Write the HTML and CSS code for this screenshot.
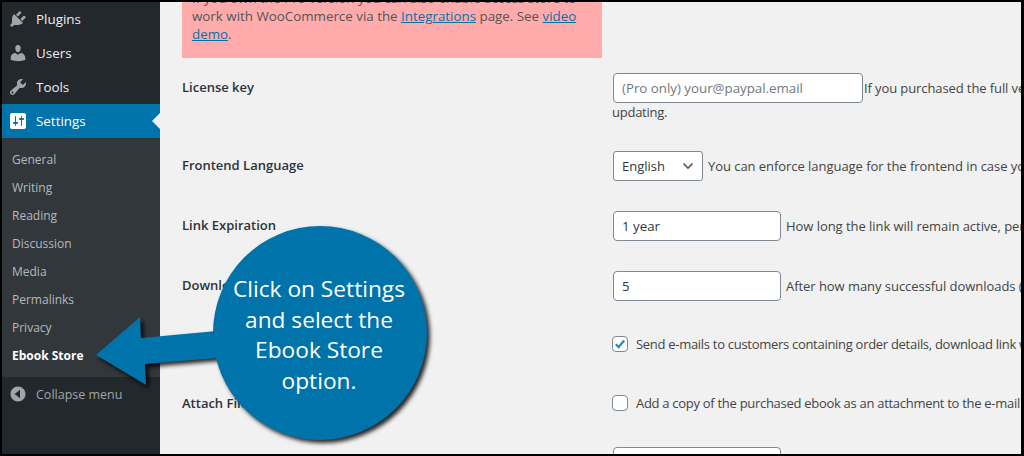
FILE: index.html
```html
<!DOCTYPE html>
<html lang="en">
<head>
<meta charset="utf-8">
<title>Ebook Store settings</title>
<link rel="stylesheet" href="styles.css">
</head>
<body>
<div class="frame">
  <nav class="sidebar">
    <a class="menu-item"><svg class="menu-icon" viewBox="0 0 20 20"><path d="M13.11 4.36L9.87 7.6 8 5.73l3.24-3.24c.35-.34 1.05-.2 1.56.32.52.51.66 1.21.31 1.55zm-8 1.77l.91-1.12 9.01 9.01-1.19.84c-.71.71-2.63 1.16-3.82 1.16H6.14L4.9 17.26c-.59.59-1.54.59-2.12 0-.59-.58-.59-1.53 0-2.12l1.24-1.24v-3.88c0-1.13.4-3.19 1.09-3.89zm7.26 3.97l3.24-3.24c.34-.35 1.04-.21 1.55.31.52.51.66 1.21.31 1.55l-3.24 3.25z"/></svg>Plugins</a>
    <a class="menu-item"><svg class="menu-icon" viewBox="0 0 20 20"><path d="M10 9.25c-2.27 0-2.73-3.44-2.73-3.44C7 4.02 7.82 2 9.97 2c2.16 0 2.98 2.02 2.71 3.81 0 0-.41 3.44-2.68 3.44zm0 2.57L12.72 10c2.39 0 4.52 2.33 4.52 4.53v2.49s-3.65 1.13-7.24 1.13c-3.65 0-7.24-1.13-7.24-1.13v-2.49c0-2.25 1.94-4.48 4.47-4.48z"/></svg>Users</a>
    <a class="menu-item"><svg class="menu-icon" viewBox="0 0 20 20"><path d="M16.68 9.77c-1.34 1.34-3.3 1.67-4.95.99l-5.41 6.52c-.99.99-2.59.99-3.58 0s-.99-2.59 0-3.57l6.52-5.42c-.68-1.65-.35-3.61.99-4.95 1.28-1.28 3.12-1.62 4.72-1.06l-2.89 2.89 2.82 2.82 2.86-2.87c.53 1.58.18 3.39-1.08 4.65zM3.81 16.21c.4.39 1.04.39 1.43 0 .4-.4.4-1.04 0-1.43-.39-.4-1.03-.4-1.43 0-.39.39-.39 1.03 0 1.43z"/></svg>Tools</a>
    <a class="menu-item current"><svg class="menu-icon" viewBox="0 0 20 20"><path d="M18 16V4c0-1.1-.9-2-2-2H4c-1.1 0-2 .9-2 2v12c0 1.1.9 2 2 2h12c1.1 0 2-.9 2-2zM8 11h1c.55 0 1 .45 1 1s-.45 1-1 1H8v1.5c0 .28-.22.5-.5.5s-.5-.22-.5-.5V13H6c-.55 0-1-.45-1-1s.45-1 1-1h1V5.5c0-.28.22-.5.5-.5s.5.22.5.5V11zm5-2h-1c-.55 0-1-.45-1-1s.45-1 1-1h1V5.5c0-.28.22-.5.5-.5s.5.22.5.5V7h1c.55 0 1 .45 1 1s-.45 1-1 1h-1v5.5c0 .28-.22.5-.5.5s-.5-.22-.5-.5V9z"/></svg>Settings</a>
    <ul class="submenu">
      <li>General</li>
      <li>Writing</li>
      <li>Reading</li>
      <li>Discussion</li>
      <li>Media</li>
      <li>Permalinks</li>
      <li>Privacy</li>
      <li class="active">Ebook Store</li>
    </ul>
    <a class="menu-item collapse"><svg class="menu-icon" viewBox="0 0 20 20"><path d="M10 2.5c-4.1 0-7.5 3.4-7.5 7.5s3.4 7.5 7.5 7.5 7.5-3.4 7.5-7.5-3.4-7.5-7.5-7.5zM12 14.2L6.6 10 12 5.8z"/></svg>Collapse menu</a>
  </nav>

  <main class="content">
    <div class="notice">
      <p>If you own the Pro version you can also enable access store to work with WooCommerce via the <a>Integrations</a> page. See <a>video demo</a>.</p>
    </div>

    <div class="row">
      <div class="label">License key</div>
      <div class="field">
        <input class="input input-license" type="text" placeholder="(Pro only) your@paypal.email"><span class="tight">If you purchased the full version, please enter your PayPal e-mail to enable automatic</span>
        <span class="after-wrap">updating.</span>
      </div>
    </div>

    <div class="row">
      <div class="label">Frontend Language</div>
      <div class="field">
        <span class="select">English<svg class="chevron" viewBox="0 0 12 8"><path d="M1.5 1.5L6 6l4.5-4.5"/></svg></span><span class="desc">You can enforce language for the frontend in case you want to override the default</span>
      </div>
    </div>

    <div class="row">
      <div class="label">Link Expiration</div>
      <div class="field">
        <input class="input input-short" type="text" value="1 year"><span class="desc">How long the link will remain active, per purchase and per customer order</span>
      </div>
    </div>

    <div class="row">
      <div class="label">Download Limit</div>
      <div class="field">
        <input class="input input-short" type="text" value="5"><span class="desc">After how many successful downloads (per purchase) the link stops working for</span>
      </div>
    </div>

    <div class="row row-send">
      <div class="label">Send E-mails</div>
      <div class="field check-field">
        <span class="checkbox"><svg viewBox="0 0 16 16"><path d="M3.2 8.3l3.2 3.3 6.4-7.6"/></svg></span><span class="check-text">Send e-mails to customers containing order details, download link with the</span>
      </div>
    </div>

    <div class="row row-attach">
      <div class="label">Attach Files</div>
      <div class="field check-field">
        <span class="checkbox"></span><span class="check-text">Add a copy of the purchased ebook as an attachment to the e-mail message</span>
      </div>
    </div>

    <div class="row">
      <div class="label">Sender</div>
      <div class="field"><input class="input input-short" type="text"></div>
    </div>
  </main>

  <div class="callout">
    <svg class="callout-art" viewBox="0 0 340 226" aria-hidden="true"><path d="M1 133L45 95l1 21 76-7V136l-72 6 1 21z"/><circle cx="225" cy="111" r="107"/></svg>
    <p class="callout-text">Click on Settings and select the Ebook Store option.</p>
  </div>
</div>
</body>
</html>
```
FILE: styles.css
```css
* { box-sizing: border-box; }
html, body { margin: 0; padding: 0; }
body {
  font-family: "Open Sans", "Noto Sans", sans-serif;
  font-size: 13px;
  color: #444;
  background: #000;
}
.frame {
  position: relative;
  display: flex;
  width: 1024px;
  height: 456px;
  overflow: hidden;
  border: solid #000;
  border-width: 2px 3px 2px 2px;
  background: #f1f1f1;
}

/* sidebar */
.sidebar {
  flex: 0 0 158px;
  background: #23282d;
  color: #eee;
}
.menu-item {
  position: relative;
  display: flex;
  align-items: center;
  gap: 8px;
  height: 34px;
  padding-left: 6px;
  font-size: 13.4px;
}
.menu-icon { width: 20px; height: 20px; fill: #a0a5aa; flex: none; }
.current { background: #0073aa; color: #fff; }
.current .menu-icon { fill: #fff; }
.current::after {
  content: "";
  position: absolute;
  right: 0;
  top: 9px;
  border: 8px solid transparent;
  border-right-color: #f1f1f1;
  border-left-width: 0;
}
.submenu {
  list-style: none;
  margin: 0;
  padding: 8px 0 7px 10px;
  background: #32373c;
  color: #b4b9be;
  font-size: 12px;
}
.submenu li { height: 28px; line-height: 28px; }
.submenu .active { color: #fff; font-weight: 700; }
.collapse { color: #a0a5aa; font-size: 12.5px; }

/* main */
.content {
  flex: 1;
  min-width: 0;
  overflow: hidden;
  padding-left: 22px;
  white-space: nowrap;
}
.notice {
  width: 420px;
  height: 79px;
  margin-top: -23px;
  padding: 10px 20px 0 10px;
  background: #ffabab;
  color: #555;
  white-space: normal;
  font-size: 13.35px;
  line-height: 18px;
}
.notice p { margin: 0; }
.notice a { color: #0073aa; text-decoration: underline; }
.row {
  display: flex;
  padding: 15px 0;
}
.label {
  flex: 0 0 430px;
  padding-top: 6px;
  color: #2c3338;
  font-weight: 600;
  font-size: 13px;
  line-height: 17px;
}
.field { line-height: 30px; min-width: 0; letter-spacing: -0.05px; }
.input {
  height: 30px;
  padding: 0 8px;
  border: 1px solid #7e8993;
  border-radius: 4px;
  background: #fff;
  color: #32373c;
  font: inherit;
  font-size: 13.3px;
  letter-spacing: 0;
  vertical-align: top;
  margin-left: 1px;
}
.input::placeholder { color: #72777c; opacity: 1; }
.input-license { width: 250px; }
.input-short { width: 168px; }
.tight { margin-left: 1px; letter-spacing: -0.1px; }
.after-wrap { display: block; height: 18px; line-height: 18px; letter-spacing: -0.25px; }
.select {
  display: inline-flex;
  align-items: center;
  justify-content: space-between;
  width: 90px;
  height: 30px;
  margin-left: 1px;
  padding: 0 8px;
  border: 1px solid #7e8993;
  border-radius: 3px;
  background: #fff;
  color: #32373c;
  letter-spacing: 0;
  vertical-align: top;
}
.chevron { width: 12px; height: 8px; fill: none; stroke: #555; stroke-width: 1.6; }
.desc { margin-left: 5px; }
.check-field { display: flex; align-items: center; height: 26px; line-height: 26px; letter-spacing: -0.29px; }
.row-send { padding-bottom: 18px; }
.row-attach { padding-bottom: 16px; }
.row-attach .label { padding-top: 5px; }
.checkbox {
  flex: none;
  width: 16px;
  height: 16px;
  margin-right: 8px;
  border: 1px solid #7e8993;
  border-radius: 4px;
  background: #fff;
}
.checkbox svg {
  display: block;
  width: 14px;
  height: 14px;
  fill: none;
  stroke: #1e8cbe;
  stroke-width: 2.6;
}

/* callout */
.callout {
  position: absolute;
  left: 93px;
  top: 220px;
  width: 340px;
  height: 226px;
}
.callout-art {
  display: block;
  width: 340px;
  height: 226px;
  fill: #0073aa;
  filter: drop-shadow(3px 3px 2px rgba(0,0,0,.85));
}
.callout-text {
  position: absolute;
  left: 124px;
  top: 52px;
  width: 200px;
  margin: 0;
  color: #fff;
  font-size: 22.7px;
  line-height: 30.5px;
  text-align: center;
}
```
